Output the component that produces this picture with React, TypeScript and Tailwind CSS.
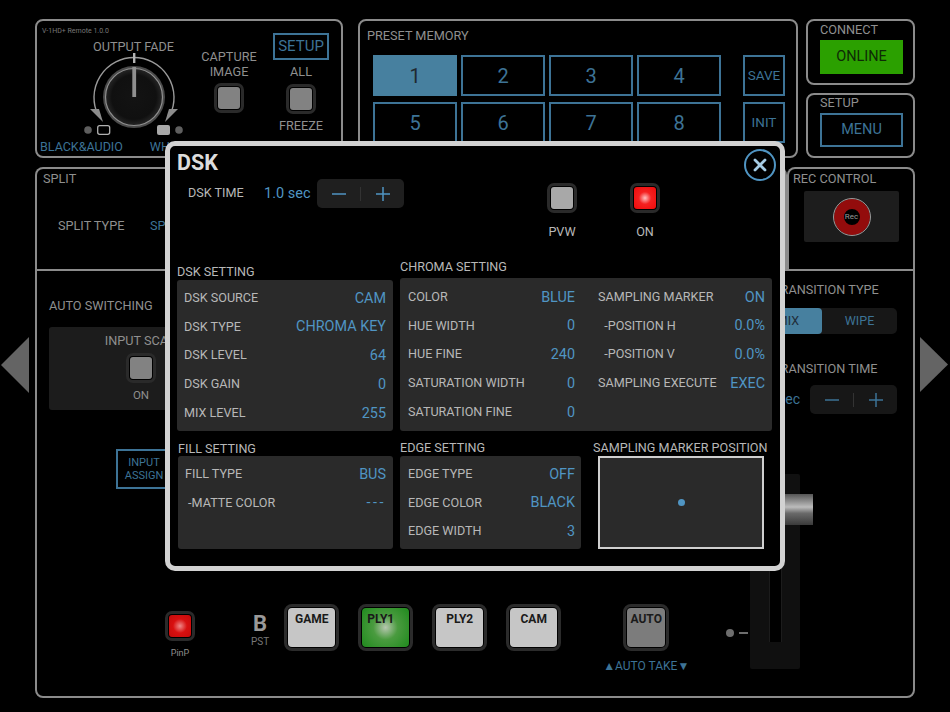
import React from 'react'

// ─── Small parts ───────────────────────────────────────────────

type Row = { label: string; value: string }

const dskRows: Row[] = [
  { label: 'DSK SOURCE', value: 'CAM' },
  { label: 'DSK TYPE', value: 'CHROMA KEY' },
  { label: 'DSK LEVEL', value: '64' },
  { label: 'DSK GAIN', value: '0' },
  { label: 'MIX LEVEL', value: '255' },
]

const chromaLeft: Row[] = [
  { label: 'COLOR', value: 'BLUE' },
  { label: 'HUE WIDTH', value: '0' },
  { label: 'HUE FINE', value: '240' },
  { label: 'SATURATION WIDTH', value: '0' },
  { label: 'SATURATION FINE', value: '0' },
]

const chromaRight: Row[] = [
  { label: 'SAMPLING MARKER', value: 'ON' },
  { label: '  -POSITION H', value: '0.0%' },
  { label: '  -POSITION V', value: '0.0%' },
  { label: 'SAMPLING EXECUTE', value: 'EXEC' },
]

const fillRows: Row[] = [
  { label: 'FILL TYPE', value: 'BUS' },
  { label: ' -MATTE COLOR', value: '---' },
]

const edgeRows: Row[] = [
  { label: 'EDGE TYPE', value: 'OFF' },
  { label: 'EDGE COLOR', value: 'BLACK' },
  { label: 'EDGE WIDTH', value: '3' },
]

function SettingRows({ rows }: { rows: Row[] }) {
  return (
    <div className="flex flex-col">
      {rows.map((r) => (
        <div key={r.label} className="flex h-[28.75px] items-center justify-between">
          <span className="whitespace-pre text-[12.6px] text-[#b8b8b8]">{r.label}</span>
          <span className={`text-[14.4px] text-[#5095c3] ${r.value === '---' ? 'tracking-[2.5px]' : ''}`}>{r.value}</span>
        </div>
      ))}
    </div>
  )
}

function Led({ fill }: { fill: string }) {
  return (
    <div className="h-[30px] w-[30px] rounded-[7px] border-[3px] border-[#2a2a2a] bg-black p-[1px]">
      <div className={`h-full w-full rounded-[3px] ${fill}`} />
    </div>
  )
}

function Stepper({ dim }: { dim?: boolean }) {
  const color = dim ? 'text-[#3d7396]' : 'text-[#5095c3]'
  return (
    <div className={`flex h-[29px] w-[87px] items-center rounded-[5px] ${dim ? 'bg-[#171717]' : 'bg-[#1f1f1f]'}`}>
      <span className={`flex flex-1 justify-center ${color}`}>
        <svg width="14" height="14" viewBox="0 0 14 14">
          <path d="M0 7h14" stroke="currentColor" strokeWidth="1.5" />
        </svg>
      </span>
      <span className="h-[14px] w-px bg-[#333]" />
      <span className={`flex flex-1 justify-center ${color}`}>
        <svg width="14" height="14" viewBox="0 0 14 14">
          <path d="M0 7h14M7 0v14" stroke="currentColor" strokeWidth="1.5" />
        </svg>
      </span>
    </div>
  )
}

function BankButton({ label, fill, glow, w = 'w-[55px]', h = 'h-[47px]' }: { label: string; fill?: string; glow?: boolean; w?: string; h?: string }) {
  return (
    <div className={`${w} ${h} rounded-[8px] border-[3px] border-[#2b2b2b] bg-black p-[1px]`}>
      <div
        className={`flex h-full w-full items-start justify-center rounded-[4px] pt-[2px] text-[12px] font-bold text-[#1a1a1a] ${fill ?? 'bg-[#c6c6c6]'} ${glow ? 'pr-[10px]' : ''}`}
      >
        {label}
      </div>
    </div>
  )
}

function Knob() {
  return (
    <svg width="110" height="84" viewBox="0 0 110 84" className="ml-[42px]">
      <defs>
        <radialGradient id="knobFace" cx="50%" cy="50%" r="50%">
          <stop offset="0%" stopColor="#131313" />
          <stop offset="78%" stopColor="#101010" />
          <stop offset="100%" stopColor="#262626" />
        </radialGradient>
      </defs>
      {/* sweep arc and end arrows */}
      <path d="M19 62A40 40 0 1 1 91 62" fill="none" stroke="#9a9a9a" strokeWidth="1.4" />
      <path d="M11 56l9 0 4 13z" fill="#8c8c8c" />
      <path d="M99 56l-9 0-4 13z" fill="#8c8c8c" />
      <rect x="54" y="0" width="2.4" height="10" fill="#b4b4b4" />
      {/* knob */}
      <circle cx="55" cy="44" r="31" fill="#4a4a4a" />
      <circle cx="55" cy="44" r="28.5" fill="url(#knobFace)" stroke="#8f8f8f" strokeWidth="1.2" />
      <rect x="53.3" y="14" width="3.8" height="30" fill="#8f8f8f" />
      {/* fade end markers */}
      <circle cx="9" cy="77" r="3.8" fill="#5f5f5f" />
      <rect x="18.7" y="72.7" width="12" height="8.6" rx="2" fill="none" stroke="#b0b0b0" strokeWidth="1.3" />
      <rect x="78" y="72" width="13" height="10" rx="2" fill="#a8a8a8" />
      <circle cx="100" cy="77" r="3.8" fill="#5f5f5f" />
    </svg>
  )
}

// ─── DSK dialog ─────────────────────────────────────────────────

function DskDialog() {
  return (
    <div className="absolute left-[165px] top-[141px] h-[430px] w-[620px] rounded-[10px] border-[5px] border-[#d2d2d2] bg-black font-['Roboto',sans-serif]">
      <button className="absolute right-[4px] top-[3px] flex h-[32px] w-[32px] items-center justify-center rounded-full border-2 border-[#5095c3]">
        <svg width="14" height="14" viewBox="0 0 14 14">
          <path d="M2 2l10 10M12 2L2 12" stroke="#a6cde6" strokeWidth="2.8" strokeLinecap="round" />
        </svg>
      </button>

      <div className="flex h-[112px] pl-[7px] pt-[4px]">
        <div className="w-[300px]">
          <div className="text-[21.5px] font-bold leading-[25px] text-[#dcdcdc]">DSK</div>
          <div className="mt-[4px] flex items-center pl-[11px]">
            <span className="w-[76px] text-[12.6px] text-[#b8b8b8]">DSK TIME</span>
            <span className="w-[53px] text-[14.5px] text-[#5095c3]">1.0 sec</span>
            <Stepper />
          </div>
        </div>
        <div className="ml-[70px] mt-[33px] flex w-[30px] flex-col items-center">
          <Led fill="bg-[#a8a8a8]" />
          <span className="mt-[10px] text-[12.6px] text-[#b8b8b8]">PVW</span>
        </div>
        <div className="ml-[53px] mt-[33px] flex w-[30px] flex-col items-center">
          <Led fill="bg-[radial-gradient(circle,#ffc0c0_0%,#f52020_40%,#ee0a0a_100%)]" />
          <span className="mt-[10px] text-[12.6px] text-[#b8b8b8]">ON</span>
        </div>
      </div>

      <div className="flex pl-[7px]">
        <div className="w-[216px]">
          <div className="flex h-[22px] items-end pb-[1px] text-[12.6px] leading-[14px] text-[#b8b8b8]">DSK SETTING</div>
          <div className="h-[151px] rounded-[3px] bg-[#2a2a2a] px-[7px] pb-[3px] pt-[4px]">
            <SettingRows rows={dskRows} />
          </div>
        </div>
        <div className="ml-[7px] w-[372px]">
          <div className="h-[20px] pt-[2px] text-[12.6px] leading-[14px] text-[#b8b8b8]">CHROMA SETTING</div>
          <div className="flex h-[153px] rounded-[3px] bg-[#2a2a2a] pb-[4px] pl-[8px] pr-[7px] pt-[5px]">
            <div className="w-[167px]">
              <SettingRows rows={chromaLeft} />
            </div>
            <div className="ml-[23px] flex-1">
              <SettingRows rows={chromaRight} />
            </div>
          </div>
        </div>
      </div>

      <div className="mt-[10px] flex pl-[7px]">
        <div className="ml-px w-[215px]">
          <div className="h-[15px] pt-[1px] text-[12.6px] leading-[14px] text-[#b8b8b8]">FILL SETTING</div>
          <div className="h-[93px] rounded-[3px] bg-[#2a2a2a] px-[7px] pb-[3px] pt-[4px]">
            <SettingRows rows={fillRows} />
          </div>
        </div>
        <div className="ml-[7px] w-[181px]">
          <div className="h-[15px] text-[12.6px] leading-[14px] text-[#b8b8b8]">EDGE SETTING</div>
          <div className="h-[93px] rounded-[3px] bg-[#2a2a2a] pb-[3px] pl-[8px] pr-[6px] pt-[4px]">
            <SettingRows rows={edgeRows} />
          </div>
        </div>
        <div className="ml-[12px] w-[178px]">
          <div className="h-[15px] whitespace-nowrap text-[12.6px] leading-[14px] text-[#b8b8b8]">SAMPLING MARKER POSITION</div>
          <div className="ml-[5px] flex h-[93px] w-[166px] items-center justify-center border-2 border-[#cfcfcf] bg-[#2a2a2a]">
            <span className="h-[7px] w-[7px] rounded-full bg-[#5095c3]" />
          </div>
        </div>
      </div>
    </div>
  )
}

// ─── Page ───────────────────────────────────────────────────────

const presetBtn = 'flex items-center justify-center border-2 border-[#3d7396] text-[20px] text-[#3d7396]'
const panel = 'rounded-[8px] border-2 border-[#8b8b8b]'

export default function App() {
  return (
    <div className="relative flex h-[712px] w-[950px] overflow-hidden bg-black font-['Roboto',sans-serif] text-[#8b8b8b]">
      <div className="flex w-[35px] items-center justify-start">
        <svg width="29" height="56" viewBox="0 0 29 56" className="ml-px mt-[17px]">
          <path d="M28 0v56L0 28z" fill="#646464" />
        </svg>
      </div>

      <div className="flex w-[880px] flex-col pt-[19px]">
        {/* top row */}
        <div className="flex h-[139px]">
          <div className={`${panel} flex w-[308px]`}>
            <div className="w-[154px]">
              <div className="h-[17px] pl-[5px] pt-[6px] text-[7px] leading-[9px] text-[#777]">V-1HD+ Remote 1.0.0</div>
              <div className="ml-[56px] mt-[2px] h-[13px] whitespace-nowrap text-[12.7px] leading-[14px] text-[#8f8f8f]">OUTPUT FADE</div>
              <Knob />
              <div className="ml-[3px] mt-[3px] flex text-[12.5px] leading-[14px] text-[#3d7396]">
                <span>BLACK&amp;AUDIO</span>
                <span className="ml-[27px]">WHITE</span>
              </div>
            </div>
            <div className="flex w-[76px] flex-col items-center pt-[28px]">
              <div className="text-center text-[12.7px] leading-[15px] text-[#8f8f8f]">
                CAPTURE
                <br />
                IMAGE
              </div>
              <div className="mt-[4px]">
                <Led fill="bg-[#828282]" />
              </div>
            </div>
            <div className="flex w-[68px] flex-col items-center pt-[12px]">
              <div className="flex h-[27px] w-[56px] items-center justify-center border-2 border-[#3d7396] text-[15px] text-[#3d7396]">SETUP</div>
              <div className="mt-[4px] text-[12.7px] leading-[15px] text-[#8f8f8f]">ALL</div>
              <div className="mt-[5px]">
                <Led fill="bg-[#828282]" />
              </div>
              <div className="mt-[4px] text-[12.7px] leading-[15px] text-[#8f8f8f]">FREEZE</div>
            </div>
          </div>

          <div className={`${panel} ml-[15px] flex w-[440px] flex-col pl-[13px]`}>
            <div className="ml-[-6px] h-[34px] pt-[8px] text-[12.7px] leading-[14px] text-[#8f8f8f]">PRESET MEMORY</div>
            <div className="flex">
              <div className="grid w-[348px] grid-cols-[84px_84px_84px_84px] grid-rows-[41px_41px] gap-x-[4px] gap-y-[6px]">
                <div className="flex items-center justify-center bg-[#47809f] text-[20px] text-[#202830]">1</div>
                {['2', '3', '4', '5', '6', '7', '8'].map((n) => (
                  <div key={n} className={presetBtn}>
                    {n}
                  </div>
                ))}
              </div>
              <div className="ml-[22px] grid w-[42px] grid-rows-[41px_41px] gap-y-[6px]">
                <div className={`${presetBtn} !text-[13.5px]`}>SAVE</div>
                <div className={`${presetBtn} !text-[13.5px]`}>INIT</div>
              </div>
            </div>
          </div>

          <div className="ml-[8px] flex w-[109px] flex-col gap-[8px]">
            <div className={`${panel} h-[66px] px-[12px]`}>
              <div className="h-[19px] pt-[2px] text-[12.7px] leading-[14px] text-[#8f8f8f]">CONNECT</div>
              <div className="flex h-[34px] w-[83px] items-center justify-center bg-[#2ba000] text-[14.5px] text-[#0e2a06]">ONLINE</div>
            </div>
            <div className={`${panel} h-[65px] px-[12px]`}>
              <div className="h-[18px] pt-[1px] text-[12.7px] leading-[14px] text-[#8f8f8f]">SETUP</div>
              <div className="flex h-[34px] w-[83px] items-center justify-center border-2 border-[#3d7396] text-[14.5px] text-[#3d7396]">MENU</div>
            </div>
          </div>
        </div>

        {/* split and rec row */}
        <div className="mt-[9px] flex h-[102px]">
          <div className="flex-1 rounded-t-[8px] border-2 border-b-0 border-[#8b8b8b] pl-[6px] pt-[3px]">
            <div className="text-[12.7px] leading-[14px] text-[#8f8f8f]">SPLIT</div>
            <div className="mt-[33px] flex pl-[15px] text-[12.7px] leading-[14px] text-[#8f8f8f]">
              <span className="w-[92px]">SPLIT TYPE</span>
              <span className="text-[#3d7396]">SPLIT</span>
            </div>
          </div>
          <div className="w-[128px] rounded-t-[8px] border-2 border-b-0 border-[#8b8b8b] pl-[4px] pt-[3px]">
            <div className="text-[12.7px] leading-[14px] text-[#8f8f8f]">REC CONTROL</div>
            <div className="ml-[11px] mt-[5px] flex h-[51px] w-[95px] items-center justify-center rounded-[2px] bg-[#1d1d1d]">
              <div className="flex h-[36px] w-[36px] items-center justify-center rounded-full border-[10px] border-[#930c0c] bg-black outline-1 outline-[#999]">
                <span className="whitespace-nowrap text-[8px] leading-[10px] text-[#9a9a9a]">Rec</span>
              </div>
            </div>
          </div>
        </div>

        {/* main panel */}
        <div className="flex h-[429px] rounded-b-[8px] border-2 border-[#8b8b8b]">
          <div className="flex w-[713px] flex-col">
            <div className="ml-[12px] h-[56px] pt-[28px] text-[12.7px] leading-[14px] text-[#8f8f8f]">AUTO SWITCHING</div>
            <div className="ml-[12px] flex h-[83px] w-[200px] flex-col items-center rounded-[3px] bg-[#1c1c1c] pr-[16px] pt-[7px]">
              <div className="text-[12.7px] leading-[14px] text-[#8f8f8f]">INPUT SCAN</div>
              <div className="mt-[5px]">
                <Led fill="bg-[#828282]" />
              </div>
              <div className="mt-[5px] text-[11.5px] leading-[14px] text-[#8f8f8f]">ON</div>
            </div>
            <div className="ml-[79px] mt-[39px] flex h-[40px] w-[56px] items-center justify-center border-2 border-[#3d7396] text-center text-[11px] leading-[13px] text-[#3d7396]">
              INPUT
              <br />
              ASSIGN
            </div>

            <div className="mt-auto flex h-[92px] pb-[25px] pl-[128px]">
              <div className="flex flex-col items-center pt-[7px]">
                <Led fill="bg-[radial-gradient(circle,#e88_0%,#d81010_45%,#c40a0a_100%)]" />
                <span className="mt-[6px] text-[9px] leading-[12px] text-[#8f8f8f]">PinP</span>
              </div>
              <div className="ml-[56px] flex flex-col items-center pt-[10px]">
                <span className="text-[22px] font-bold leading-[20px] text-[#999]">B</span>
                <span className="mt-[2px] text-[10px] leading-[11px] text-[#777]">PST</span>
              </div>
              <div className="ml-[15px]">
                <BankButton label="GAME" />
              </div>
              <div className="ml-[19px]">
                <BankButton
                  label="PLY1"
                  glow
                  fill="bg-[radial-gradient(circle,#b7c7b0_0%,#4a9b3f_40%,#1f8a1d_100%)]"
                />
              </div>
              <div className="ml-[19px]">
                <BankButton label="PLY2" />
              </div>
              <div className="ml-[19px]">
                <BankButton label="CAM" />
              </div>
              <div className="ml-[62px] w-[46px]">
                <BankButton label="AUTO" w="w-[46px]" fill="bg-[#7c7c7c]" />
                <div className="ml-[-24px] mt-[8px] w-[94px] whitespace-nowrap text-center text-[12px] leading-[14px] text-[#3d7396]">▲AUTO TAKE▼</div>
              </div>
              <div className="ml-[57px] mt-[25px] flex h-[8px] items-center gap-[5px]">
                <span className="h-[8px] w-[8px] rounded-full bg-[#6d6d6d]" />
                <span className="h-[1.5px] w-[9px] bg-[#6d6d6d]" />
              </div>
            </div>
          </div>

          <div className="flex flex-1 flex-col">
            <div className="h-[37px] whitespace-nowrap pl-[23px] pt-[12px] text-[12.7px] leading-[14px] text-[#8f8f8f]">TRANSITION TYPE</div>
            <div className="ml-[4px] flex h-[26px] w-[143px] rounded-[5px] bg-[#171717]">
              <div className="flex w-[68px] items-center justify-center rounded-[4px] bg-[#47809f] text-[12.5px] text-[#1f2c38]">MIX</div>
              <div className="flex flex-1 items-center justify-center text-[12.5px] text-[#3d7396]">WIPE</div>
            </div>
            <div className="h-[42px] whitespace-nowrap pl-[23px] pt-[28px] text-[12.7px] leading-[14px] text-[#8f8f8f]">TRANSITION TIME</div>
            <div className="mt-[9px] flex items-center">
              <span className="w-[60px] whitespace-nowrap pr-[10px] text-right text-[14px] text-[#3d7396]">1.0 sec</span>
              <Stepper dim />
            </div>
            <div className="relative mt-[60px] h-[195px] w-[50px] rounded-[2px] bg-[#101010]">
              <div className="absolute left-[19px] top-0 h-[168px] w-[13px] border-x border-[#1c1c1c] bg-black" />
              <div className="absolute -left-[13px] top-[20px] h-[31px] w-[76px] bg-[linear-gradient(#555_0%,#bcbcbc_42%,#6a6a6a_62%,#3a3a3a_100%)]" />
            </div>
          </div>
        </div>
      </div>

      <div className="flex w-[35px] items-center justify-end">
        <svg width="28" height="55" viewBox="0 0 28 55" className="mr-[2px] mt-[17px]">
          <path d="M0 0v55l28-27.5z" fill="#646464" />
        </svg>
      </div>

      <DskDialog />
    </div>
  )
}
